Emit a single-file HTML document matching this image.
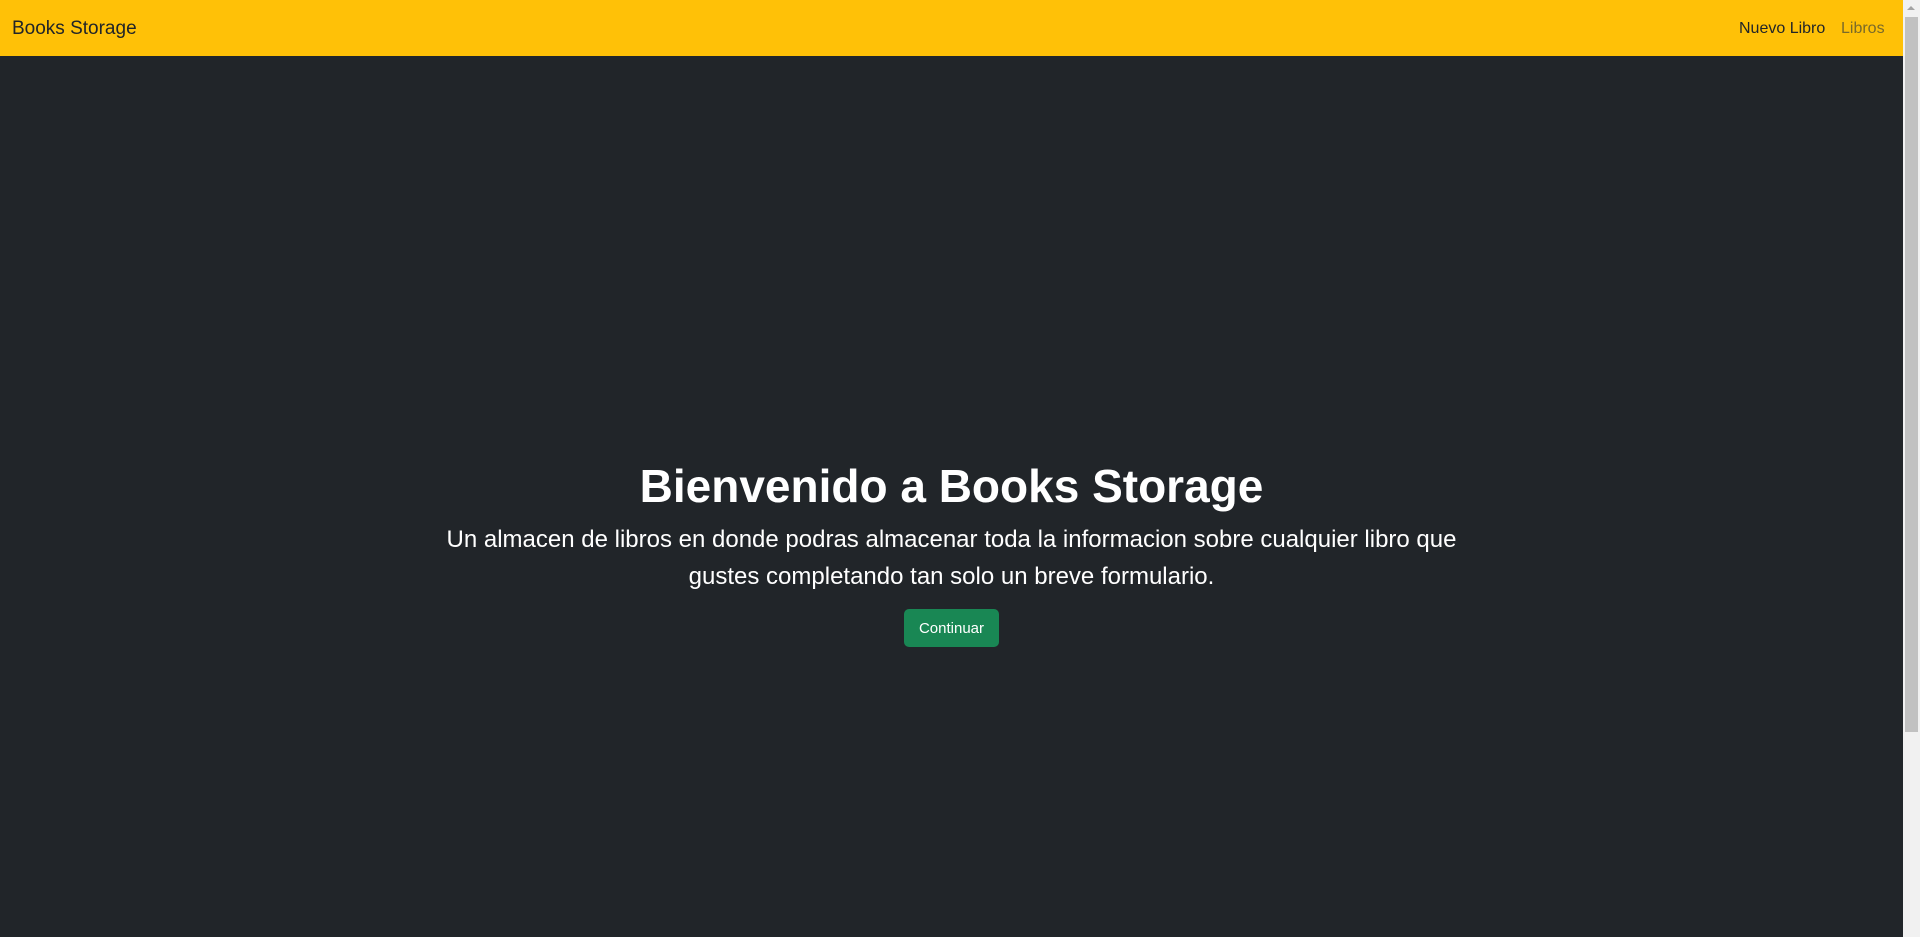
<!DOCTYPE html>
<html><head><meta charset="utf-8"><style>
html,body{margin:0;padding:0;width:1920px;height:937px;overflow:hidden;background:#212529;font-family:"Segoe UI","Liberation Sans",sans-serif;}
.nav{position:absolute;left:0;top:0;width:1903px;height:56px;background:#ffc107;}
.brand{position:absolute;left:12px;top:18px;font-size:19px;color:#212529;}
.l1{position:absolute;left:1739px;top:20px;font-size:16px;color:#212529;}
.l2{position:absolute;left:1841px;top:20px;font-size:16px;color:#7a6a2a;}
.sb{position:absolute;left:1903px;top:0;width:17px;height:937px;background:#f1f1f1;}
.thumb{position:absolute;left:1905px;top:17px;width:13px;height:715px;background:#c1c1c1;}
.arr{position:absolute;left:1907px;top:6px;width:0;height:0;border-left:4px solid transparent;border-right:4px solid transparent;border-bottom:4px solid #a3a3a3;}
h1{position:absolute;left:0;width:1903px;top:458px;margin:0;text-align:center;color:#fff;font-size:46px;font-weight:bold;line-height:56px;}
p{position:absolute;left:0;width:1903px;top:521px;margin:0;text-align:center;color:#fff;font-size:24px;line-height:37px;}
.btn{position:absolute;left:904px;top:609px;width:95px;height:38px;background:#198754;border-radius:5px;color:#fff;font-size:15px;line-height:40px;text-align:center;}
</style></head><body>
<div class="nav"><div class="brand">Books Storage</div><div class="l1">Nuevo Libro</div><div class="l2">Libros</div></div>
<div class="sb"></div><div class="arr"></div><div class="thumb"></div>
<h1>Bienvenido a Books Storage</h1>
<p>Un almacen de libros en donde podras almacenar toda la informacion sobre cualquier libro que<br>gustes completando tan solo un breve formulario.</p>
<div class="btn">Continuar</div>
</body></html>
